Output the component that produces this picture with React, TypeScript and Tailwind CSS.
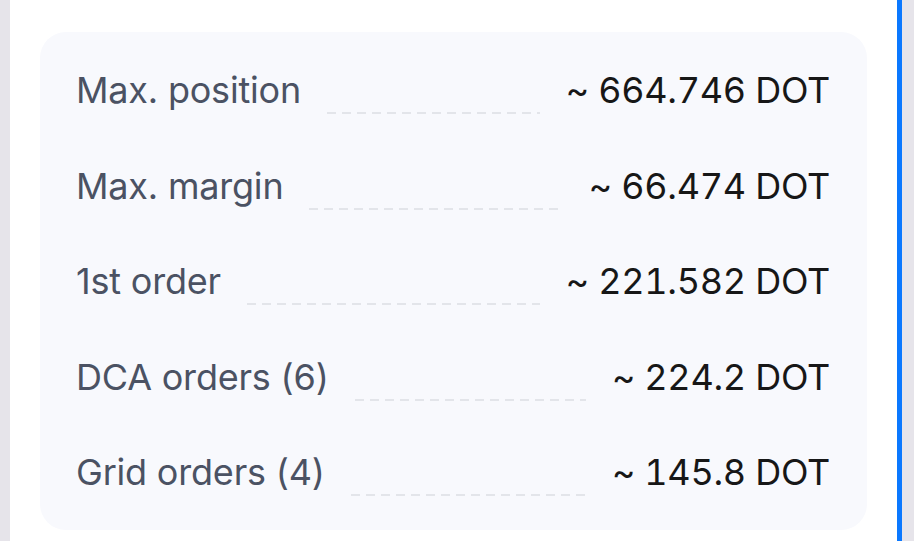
import React from 'react';

interface Row {
  label: string;
  value: string;
}

const rows: Row[] = [
  { label: 'Max. position', value: '~ 664.746 DOT' },
  { label: 'Max. margin', value: '~ 66.474 DOT' },
  { label: '1st order', value: '~ 221.582 DOT' },
  { label: 'DCA orders (6)', value: '~ 224.2 DOT' },
  { label: 'Grid orders (4)', value: '~ 145.8 DOT' },
];

function SummaryRow({ label, value }: Row) {
  return (
    <div className="flex items-end h-[48px] leading-[48px] text-[36px]">
      <span className="text-[#4b5263] whitespace-nowrap tracking-[-0.2px]">{label}</span>
      <div className="flex-1 mx-[26px] h-[2px] bg-[repeating-linear-gradient(to_right,#e3e5ea_0_9px,transparent_9px_15px)]" />
      <span className="text-[#171717] whitespace-nowrap tabular-nums tracking-[-0.3px]">{value}</span>
    </div>
  );
}

export default function App() {
  return (
    <div
      className="flex w-[914px] h-[541px] overflow-hidden bg-white"
      style={{ fontFamily: 'Inter, "Noto Sans", sans-serif' }}
    >
      <div className="w-[10px] bg-[#e6e4ea]" />
      <div className="flex-1 px-[30px] pt-[32px]">
        <div className="flex flex-col gap-[47.5px] rounded-[26px] bg-[#f8f9fd] pl-[36px] pr-[37px] pt-[34px] pb-[34px]">
          {rows.map((r) => (
            <SummaryRow key={r.label} label={r.label} value={r.value} />
          ))}
        </div>
      </div>
      <div className="w-[5px] bg-[#0a78ff]" />
      <div className="w-[12px] bg-[#e6e4ea]" />
    </div>
  );
}
